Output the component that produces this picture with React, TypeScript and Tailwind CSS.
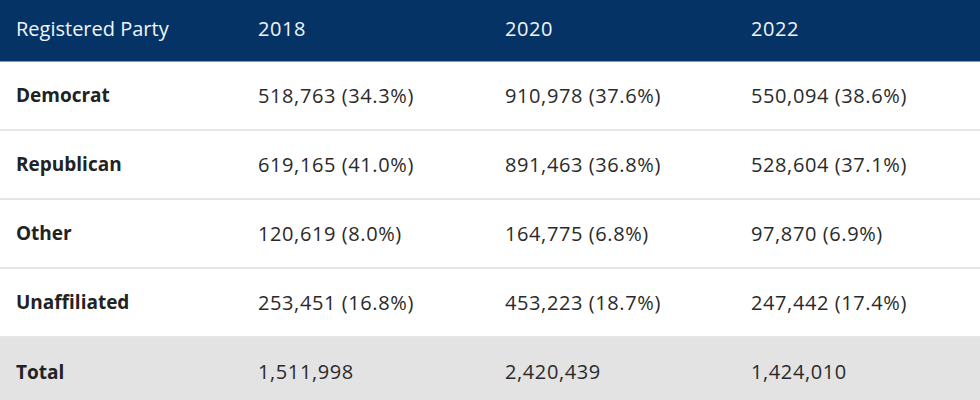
const rows = [
  { party: "Democrat", v: ["518,763 (34.3%)", "910,978 (37.6%)", "550,094 (38.6%)"] },
  { party: "Republican", v: ["619,165 (41.0%)", "891,463 (36.8%)", "528,604 (37.1%)"] },
  { party: "Other", v: ["120,619 (8.0%)", "164,775 (6.8%)", "97,870 (6.9%)"] },
  { party: "Unaffiliated", v: ["253,451 (16.8%)", "453,223 (18.7%)", "247,442 (17.4%)"] },
];

const cols = "grid grid-cols-[242px_247px_246px_1fr]";

export default function App() {
  return (
    <div className="w-[980px] h-[400px] overflow-hidden bg-white font-['Open_Sans',sans-serif] text-[19px] text-[#222]">
      <div className={`${cols} h-[62px] pb-1 items-center bg-[#053366] border-b border-[#6f9ccc] text-[20px] text-[#f2f5f9]`}>
        <div className="pl-4">Registered Party</div>
        <div className="pl-4 tracking-[0.6px]">2018</div>
        <div className="pl-4 tracking-[0.6px]">2020</div>
        <div className="pl-4 tracking-[0.6px]">2022</div>
      </div>
      {rows.map((r) => (
        <div key={r.party} className={`${cols} h-[69px] items-center border-b-2 border-[#e6e6e6]`}>
          <div className="pl-4 font-bold">{r.party}</div>
          {r.v.map((x, i) => (
            <div key={i} className="pl-4 text-[20px] tracking-[0.6px] text-[#2a2a2a]">{x}</div>
          ))}
        </div>
      ))}
      <div className={`${cols} h-[68px] items-center bg-[#e3e3e3]`}>
        <div className="pl-4 font-bold">Total</div>
        <div className="pl-4 text-[20px] tracking-[0.6px] text-[#2a2a2a]">1,511,998</div>
        <div className="pl-4 text-[20px] tracking-[0.6px] text-[#2a2a2a]">2,420,439</div>
        <div className="pl-4 text-[20px] tracking-[0.6px] text-[#2a2a2a]">1,424,010</div>
      </div>
    </div>
  );
}
